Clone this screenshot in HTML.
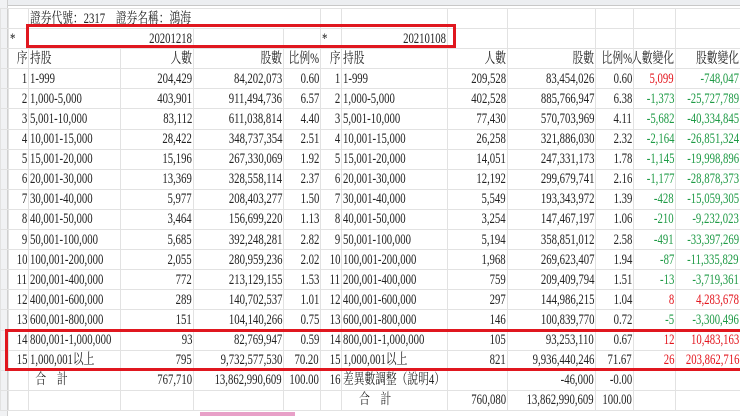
<!DOCTYPE html>
<html><head><meta charset="utf-8"><style>
*{margin:0;padding:0;box-sizing:border-box}
body{width:740px;height:416px;overflow:hidden;background:#fff;position:relative;font-family:"Liberation Serif","Noto Serif CJK SC",serif;color:#222}
#hdr{position:absolute;left:0;top:0;width:740px;height:6px;background:#eceef1;border-bottom:1px solid #c8c8c8}
#lft{position:absolute;left:0;top:0;width:8px;height:416px;background:#f1f2f4;border-right:1px solid #cfcfcf}
table{position:absolute;left:0;top:8px;border-collapse:collapse;table-layout:fixed;width:740px}
td{height:20.1px;border:1px solid #e2e2e2;font-size:14.5px;white-space:nowrap;overflow:visible;padding:0 1px;line-height:18px}
td.r{text-align:right;direction:rtl}
td.r span{display:inline-block;direction:ltr;transform:scaleX(.74);transform-origin:right center}
td.l span{display:inline-block;transform:scaleX(.74);transform-origin:left center}
.red{color:#e3141c}.grn{color:#1e9a45}
.box{position:absolute;border:3px solid #e0171f}
</style></head><body>
<div id="hdr"></div><div id="lft"></div>
<table>
<colgroup><col style="width:8px"><col style="width:20px"><col style="width:92px"><col style="width:73px"><col style="width:90px"><col style="width:37px"><col style="width:21px"><col style="width:106px"><col style="width:60px"><col style="width:88px"><col style="width:38px"><col style="width:42px"><col style="width:65px"></colgroup>
<tr><td></td><td></td><td class="l" colspan="4"><span>證券代號：2317　證券名稱：鴻海</span></td><td></td><td></td><td></td><td></td><td></td><td></td><td></td></tr>
<tr><td></td><td class="l"><span>*</span></td><td class="r" colspan="2"><span>20201218</span></td><td></td><td></td><td class="l"><span>*</span></td><td class="r"><span>20210108</span></td><td></td><td></td><td></td><td></td><td></td></tr>
<tr><td></td><td class="r"><span>序</span></td><td class="l"><span>持股</span></td><td class="r"><span>人數</span></td><td class="r"><span>股數</span></td><td class="r"><span>比例%</span></td><td class="r"><span>序</span></td><td class="l"><span>持股</span></td><td class="r"><span>人數</span></td><td class="r"><span>股數</span></td><td class="r"><span>比例%</span></td><td class="r"><span>人數變化</span></td><td class="r"><span>股數變化</span></td></tr>
<tr><td></td><td class="r"><span>1</span></td><td class="l"><span>1-999</span></td><td class="r"><span>204,429</span></td><td class="r"><span>84,202,073</span></td><td class="r"><span>0.60</span></td><td class="r"><span>1</span></td><td class="l"><span>1-999</span></td><td class="r"><span>209,528</span></td><td class="r"><span>83,454,026</span></td><td class="r"><span>0.60</span></td><td class="r red"><span>5,099</span></td><td class="r grn"><span>-748,047</span></td></tr>
<tr><td></td><td class="r"><span>2</span></td><td class="l"><span>1,000-5,000</span></td><td class="r"><span>403,901</span></td><td class="r"><span>911,494,736</span></td><td class="r"><span>6.57</span></td><td class="r"><span>2</span></td><td class="l"><span>1,000-5,000</span></td><td class="r"><span>402,528</span></td><td class="r"><span>885,766,947</span></td><td class="r"><span>6.38</span></td><td class="r grn"><span>-1,373</span></td><td class="r grn"><span>-25,727,789</span></td></tr>
<tr><td></td><td class="r"><span>3</span></td><td class="l"><span>5,001-10,000</span></td><td class="r"><span>83,112</span></td><td class="r"><span>611,038,814</span></td><td class="r"><span>4.40</span></td><td class="r"><span>3</span></td><td class="l"><span>5,001-10,000</span></td><td class="r"><span>77,430</span></td><td class="r"><span>570,703,969</span></td><td class="r"><span>4.11</span></td><td class="r grn"><span>-5,682</span></td><td class="r grn"><span>-40,334,845</span></td></tr>
<tr><td></td><td class="r"><span>4</span></td><td class="l"><span>10,001-15,000</span></td><td class="r"><span>28,422</span></td><td class="r"><span>348,737,354</span></td><td class="r"><span>2.51</span></td><td class="r"><span>4</span></td><td class="l"><span>10,001-15,000</span></td><td class="r"><span>26,258</span></td><td class="r"><span>321,886,030</span></td><td class="r"><span>2.32</span></td><td class="r grn"><span>-2,164</span></td><td class="r grn"><span>-26,851,324</span></td></tr>
<tr><td></td><td class="r"><span>5</span></td><td class="l"><span>15,001-20,000</span></td><td class="r"><span>15,196</span></td><td class="r"><span>267,330,069</span></td><td class="r"><span>1.92</span></td><td class="r"><span>5</span></td><td class="l"><span>15,001-20,000</span></td><td class="r"><span>14,051</span></td><td class="r"><span>247,331,173</span></td><td class="r"><span>1.78</span></td><td class="r grn"><span>-1,145</span></td><td class="r grn"><span>-19,998,896</span></td></tr>
<tr><td></td><td class="r"><span>6</span></td><td class="l"><span>20,001-30,000</span></td><td class="r"><span>13,369</span></td><td class="r"><span>328,558,114</span></td><td class="r"><span>2.37</span></td><td class="r"><span>6</span></td><td class="l"><span>20,001-30,000</span></td><td class="r"><span>12,192</span></td><td class="r"><span>299,679,741</span></td><td class="r"><span>2.16</span></td><td class="r grn"><span>-1,177</span></td><td class="r grn"><span>-28,878,373</span></td></tr>
<tr><td></td><td class="r"><span>7</span></td><td class="l"><span>30,001-40,000</span></td><td class="r"><span>5,977</span></td><td class="r"><span>208,403,277</span></td><td class="r"><span>1.50</span></td><td class="r"><span>7</span></td><td class="l"><span>30,001-40,000</span></td><td class="r"><span>5,549</span></td><td class="r"><span>193,343,972</span></td><td class="r"><span>1.39</span></td><td class="r grn"><span>-428</span></td><td class="r grn"><span>-15,059,305</span></td></tr>
<tr><td></td><td class="r"><span>8</span></td><td class="l"><span>40,001-50,000</span></td><td class="r"><span>3,464</span></td><td class="r"><span>156,699,220</span></td><td class="r"><span>1.13</span></td><td class="r"><span>8</span></td><td class="l"><span>40,001-50,000</span></td><td class="r"><span>3,254</span></td><td class="r"><span>147,467,197</span></td><td class="r"><span>1.06</span></td><td class="r grn"><span>-210</span></td><td class="r grn"><span>-9,232,023</span></td></tr>
<tr><td></td><td class="r"><span>9</span></td><td class="l"><span>50,001-100,000</span></td><td class="r"><span>5,685</span></td><td class="r"><span>392,248,281</span></td><td class="r"><span>2.82</span></td><td class="r"><span>9</span></td><td class="l"><span>50,001-100,000</span></td><td class="r"><span>5,194</span></td><td class="r"><span>358,851,012</span></td><td class="r"><span>2.58</span></td><td class="r grn"><span>-491</span></td><td class="r grn"><span>-33,397,269</span></td></tr>
<tr><td></td><td class="r"><span>10</span></td><td class="l"><span>100,001-200,000</span></td><td class="r"><span>2,055</span></td><td class="r"><span>280,959,236</span></td><td class="r"><span>2.02</span></td><td class="r"><span>10</span></td><td class="l"><span>100,001-200,000</span></td><td class="r"><span>1,968</span></td><td class="r"><span>269,623,407</span></td><td class="r"><span>1.94</span></td><td class="r grn"><span>-87</span></td><td class="r grn"><span>-11,335,829</span></td></tr>
<tr><td></td><td class="r"><span>11</span></td><td class="l"><span>200,001-400,000</span></td><td class="r"><span>772</span></td><td class="r"><span>213,129,155</span></td><td class="r"><span>1.53</span></td><td class="r"><span>11</span></td><td class="l"><span>200,001-400,000</span></td><td class="r"><span>759</span></td><td class="r"><span>209,409,794</span></td><td class="r"><span>1.51</span></td><td class="r grn"><span>-13</span></td><td class="r grn"><span>-3,719,361</span></td></tr>
<tr><td></td><td class="r"><span>12</span></td><td class="l"><span>400,001-600,000</span></td><td class="r"><span>289</span></td><td class="r"><span>140,702,537</span></td><td class="r"><span>1.01</span></td><td class="r"><span>12</span></td><td class="l"><span>400,001-600,000</span></td><td class="r"><span>297</span></td><td class="r"><span>144,986,215</span></td><td class="r"><span>1.04</span></td><td class="r red"><span>8</span></td><td class="r red"><span>4,283,678</span></td></tr>
<tr><td></td><td class="r"><span>13</span></td><td class="l"><span>600,001-800,000</span></td><td class="r"><span>151</span></td><td class="r"><span>104,140,266</span></td><td class="r"><span>0.75</span></td><td class="r"><span>13</span></td><td class="l"><span>600,001-800,000</span></td><td class="r"><span>146</span></td><td class="r"><span>100,839,770</span></td><td class="r"><span>0.72</span></td><td class="r grn"><span>-5</span></td><td class="r grn"><span>-3,300,496</span></td></tr>
<tr><td></td><td class="r"><span>14</span></td><td class="l"><span>800,001-1,000,000</span></td><td class="r"><span>93</span></td><td class="r"><span>82,769,947</span></td><td class="r"><span>0.59</span></td><td class="r"><span>14</span></td><td class="l"><span>800,001-1,000,000</span></td><td class="r"><span>105</span></td><td class="r"><span>93,253,110</span></td><td class="r"><span>0.67</span></td><td class="r red"><span>12</span></td><td class="r red"><span>10,483,163</span></td></tr>
<tr><td></td><td class="r"><span>15</span></td><td class="l"><span>1,000,001以上</span></td><td class="r"><span>795</span></td><td class="r"><span>9,732,577,530</span></td><td class="r"><span>70.20</span></td><td class="r"><span>15</span></td><td class="l"><span>1,000,001以上</span></td><td class="r"><span>821</span></td><td class="r"><span>9,936,440,246</span></td><td class="r"><span>71.67</span></td><td class="r red"><span>26</span></td><td class="r red"><span>203,862,716</span></td></tr>
<tr><td></td><td></td><td class="l"><span>&nbsp;&nbsp;合　計</span></td><td class="r"><span>767,710</span></td><td class="r"><span>13,862,990,609</span></td><td class="r"><span>100.00</span></td><td class="r"><span>16</span></td><td class="l"><span>差異數調整（說明4）</span></td><td></td><td class="r"><span>-46,000</span></td><td class="r"><span>-0.00</span></td><td></td><td></td></tr>
<tr><td></td><td></td><td></td><td></td><td></td><td></td><td></td><td class="l"><span>&nbsp;&nbsp;&nbsp;&nbsp;&nbsp;&nbsp;合　計</span></td><td class="r"><span>760,080</span></td><td class="r"><span>13,862,990,609</span></td><td class="r"><span>100.00</span></td><td></td><td></td></tr>
</table>
<div class="box" style="left:26px;top:24px;width:430px;height:24px"></div>
<div class="box" style="left:5px;top:329px;width:740px;height:42px"></div>
<div style="position:absolute;left:200px;top:412px;width:95px;height:4px;background:#e8a0c8"></div>
</body></html>
